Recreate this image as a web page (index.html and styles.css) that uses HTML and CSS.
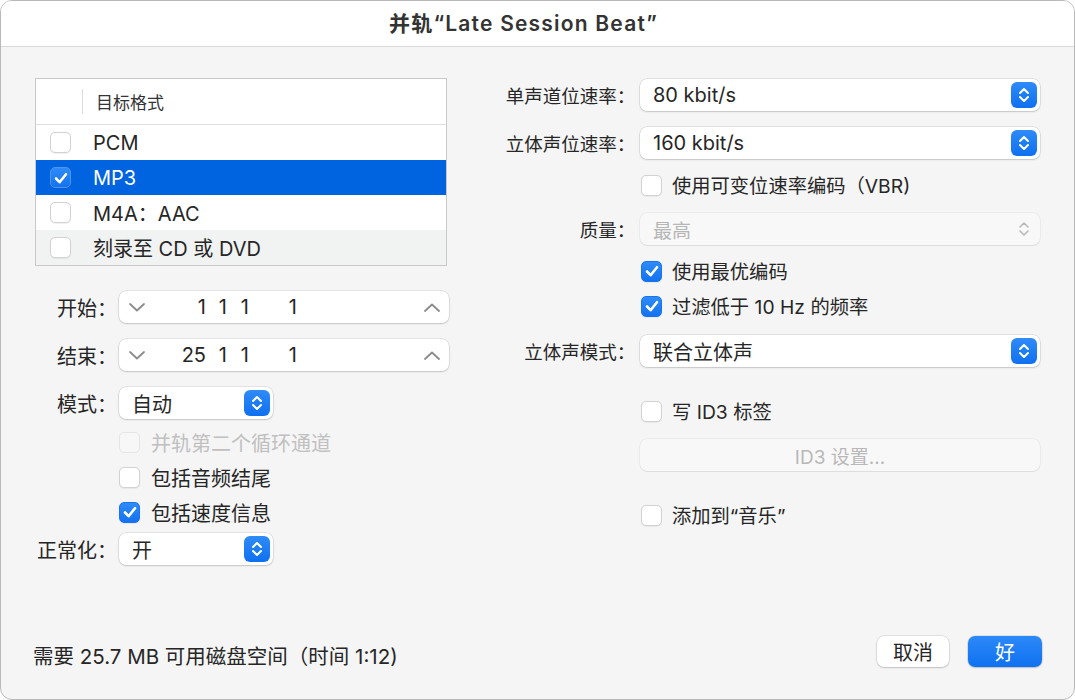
FILE: index.html
```html
<!DOCTYPE html>
<html lang="zh-CN">
<head>
<meta charset="utf-8">
<title>并轨</title>
<link rel="stylesheet" href="styles.css">
</head>
<body>
<div class="window">
  <div class="titlebar">并轨“Late Session Beat”</div>
  <div class="main">
    <div class="col-left">
      <div class="table">
        <div class="thead"><span class="tdiv"></span><span class="th">目标格式</span></div>
        <div class="trow"><span class="cb"></span><span class="tl">PCM</span></div>
        <div class="trow sel"><span class="cb on sel-cb"><svg viewBox="0 0 20 20"><path d="M5 10.5 L8.6 14.2 L15 6.2"/></svg></span><span class="tl">MP3</span></div>
        <div class="trow"><span class="cb"></span><span class="tl">M4A：AAC</span></div>
        <div class="trow alt"><span class="cb"></span><span class="tl">刻录至 CD 或 DVD</span></div>
      </div>

      <div class="frow l m25">
        <span class="lbl">开始：</span>
        <div class="stepper">
          <svg class="chev" viewBox="0 0 16 9"><path d="M1 1 L8 7.5 L15 1"/></svg>
          <span class="nums"><span class="n1">1</span><span class="n2">1</span><span class="n3">1</span><span class="n4">1</span></span>
          <svg class="chev up" viewBox="0 0 16 9"><path d="M1 8 L8 1.5 L15 8"/></svg>
        </div>
      </div>
      <div class="frow l m16">
        <span class="lbl">结束：</span>
        <div class="stepper">
          <svg class="chev" viewBox="0 0 16 9"><path d="M1 1 L8 7.5 L15 1"/></svg>
          <span class="nums"><span class="n1">25</span><span class="n2">1</span><span class="n3">1</span><span class="n4">1</span></span>
          <svg class="chev up" viewBox="0 0 16 9"><path d="M1 8 L8 1.5 L15 8"/></svg>
        </div>
      </div>
      <div class="frow l m16">
        <span class="lbl">模式：</span>
        <div class="popup small"><span class="pv">自动</span><span class="arr"><svg viewBox="0 0 26 26"><path d="M9 11 L13 7 L17 11 M9 15 L13 19 L17 15"/></svg></span></div>
      </div>
      <div class="crow l m11 dis"><span class="cb"></span><span class="ct">并轨第二个循环通道</span></div>
      <div class="crow l m11"><span class="cb"></span><span class="ct">包括音频结尾</span></div>
      <div class="crow l m11"><span class="cb on"><svg viewBox="0 0 20 20"><path d="M5 10.5 L8.6 14.2 L15 6.2"/></svg></span><span class="ct">包括速度信息</span></div>
      <div class="frow l m9">
        <span class="lbl">正常化：</span>
        <div class="popup small"><span class="pv">开</span><span class="arr"><svg viewBox="0 0 26 26"><path d="M9 11 L13 7 L17 11 M9 15 L13 19 L17 15"/></svg></span></div>
      </div>
    </div>

    <div class="col-right">
      <div class="frow r m1">
        <span class="lbl">单声道位速率：</span>
        <div class="popup"><span class="pv">80 kbit/s</span><span class="arr"><svg viewBox="0 0 26 26"><path d="M9 11 L13 7 L17 11 M9 15 L13 19 L17 15"/></svg></span></div>
      </div>
      <div class="frow r m16">
        <span class="lbl">立体声位速率：</span>
        <div class="popup"><span class="pv">160 kbit/s</span><span class="arr"><svg viewBox="0 0 26 26"><path d="M9 11 L13 7 L17 11 M9 15 L13 19 L17 15"/></svg></span></div>
      </div>
      <div class="crow r m14"><span class="cb"></span><span class="ct">使用可变位速率编码（VBR)</span></div>
      <div class="frow r m16">
        <span class="lbl">质量：</span>
        <div class="popup disabled"><span class="pv">最高</span><span class="arr"><svg viewBox="0 0 26 26"><path d="M9 11 L13 7 L17 11 M9 15 L13 19 L17 15"/></svg></span></div>
      </div>
      <div class="crow r m14"><span class="cb on"><svg viewBox="0 0 20 20"><path d="M5 10.5 L8.6 14.2 L15 6.2"/></svg></span><span class="ct">使用最优编码</span></div>
      <div class="crow r m11"><span class="cb on"><svg viewBox="0 0 20 20"><path d="M5 10.5 L8.6 14.2 L15 6.2"/></svg></span><span class="ct">过滤低于 10 Hz 的频率</span></div>
      <div class="frow r m17">
        <span class="lbl">立体声模式：</span>
        <div class="popup"><span class="pv">联合立体声</span><span class="arr"><svg viewBox="0 0 26 26"><path d="M9 11 L13 7 L17 11 M9 15 L13 19 L17 15"/></svg></span></div>
      </div>
      <div class="crow r m32"><span class="cb"></span><span class="ct">写 ID3 标签</span></div>
      <div class="frow r m16">
        <span class="lbl"></span>
        <div class="btn-wide">ID3 设置…</div>
      </div>
      <div class="crow r m32"><span class="cb"></span><span class="ct">添加到“音乐”</span></div>
    </div>
  </div>

  <div class="footer">
    <span class="info">需要 25.7 MB 可用磁盘空间（时间 1:12)</span>
    <div class="btns">
      <span class="btn">取消</span>
      <span class="btn primary">好</span>
    </div>
  </div>
</div>
</body>
</html>
```
FILE: styles.css
```css
html, body {
  margin: 0;
  padding: 0;
  background: #ffffff;
}
body {
  font-family: "Inter", "Noto Sans CJK SC", sans-serif;
  color: #262626;
}
.window {
  width: 1075px;
  height: 700px;
  box-sizing: border-box;
  border: 1px solid #b9b9b9;
  border-radius: 12px;
  overflow: hidden;
  background: #f5f5f5;
  display: flex;
  flex-direction: column;
}
.titlebar {
  height: 46px;
  flex: none;
  background: #ffffff;
  border-bottom: 1px solid #d9d9d9;
  display: flex;
  align-items: center;
  justify-content: center;
  padding: 0 28px 4px 0;
  box-sizing: border-box;
  font-size: 21px;
  font-weight: 600;
  color: #333333;
  letter-spacing: 1.2px;
}
.main {
  display: flex;
  gap: 41px;
  padding: 31px 33px 0 34px;
}
.col-left {
  width: 414px;
  flex: none;
  display: flex;
  flex-direction: column;
}
.col-right {
  width: 550px;
  flex: none;
  display: flex;
  flex-direction: column;
}
.m1 { margin-top: 1px; }
.m9 { margin-top: 9px; }
.m11 { margin-top: 11px; }
.m14 { margin-top: 14px; }
.m16 { margin-top: 16px; }
.m17 { margin-top: 17px; }
.m25 { margin-top: 25px; }
.m32 { margin-top: 32px; }

/* table */
.table {
  width: 412px;
  box-sizing: border-box;
  border: 1px solid #c9c9c9;
  background: #ffffff;
}
.thead {
  height: 45px;
  border-bottom: 1px solid #dedede;
  display: flex;
  align-items: center;
}
.tdiv {
  width: 1px;
  height: 25px;
  background: #dcdcdc;
  margin-left: 46px;
}
.th {
  margin-left: 13px;
  font-size: 17px;
  color: #333;
}
.trow {
  height: 35px;
  display: flex;
  align-items: center;
  font-size: 20px;
  color: #262626;
}
.trow .cb {
  margin-left: 14px;
}
.trow .tl {
  margin-left: 22px;
}
.trow.sel {
  background: #0064e1;
  color: #ffffff;
}
.trow.alt {
  background: #f1f2f2;
}

/* checkbox */
.cb {
  width: 21px;
  height: 21px;
  flex: none;
  box-sizing: border-box;
  border-radius: 5px;
  background: #ffffff;
  border: 1px solid #d2d2d2;
  box-shadow: 0 0.5px 1px rgba(0,0,0,0.06);
  display: flex;
  align-items: center;
  justify-content: center;
}
.cb.on {
  background: linear-gradient(#2f8bf8, #1372f0);
  border: 1px solid #1a74ee;
}
.cb.sel-cb {
  border-color: #4c95f0;
}
.cb svg {
  width: 20px;
  height: 20px;
  flex: none;
}
.cb svg path {
  fill: none;
  stroke: #ffffff;
  stroke-width: 2.6;
  stroke-linecap: round;
  stroke-linejoin: round;
}

/* form rows */
.frow {
  display: flex;
  align-items: center;
  height: 32px;
}
.lbl {
  flex: none;
  box-sizing: border-box;
  text-align: right;
  color: #262626;
  font-feature-settings: "halt";
  white-space: nowrap;
}
.frow.l .lbl {
  width: 84px;
  padding-right: 12px;
  font-size: 20px;
}
.frow.r .lbl {
  width: 150px;
  padding-right: 14px;
  font-size: 18.5px;
}
.crow {
  display: flex;
  align-items: center;
  height: 24px;
  color: #262626;
}
.crow.l {
  padding-left: 84px;
  font-size: 20px;
}
.crow.r {
  padding-left: 151px;
  font-size: 19.3px;
}
.crow .ct {
  margin-left: 11px;
}
.crow.r .ct {
  margin-left: 10px;
}
.crow.dis .cb {
  background: #f7f7f7;
  border-color: #e4e4e4;
  box-shadow: none;
}
.crow.dis .ct {
  color: #c0c0c0;
}

/* stepper */
.stepper {
  width: 330px;
  height: 32px;
  box-sizing: border-box;
  background: #ffffff;
  border-radius: 7px;
  box-shadow: 0 0 0 0.5px rgba(0,0,0,0.14), 0 1px 2px rgba(0,0,0,0.14);
  display: flex;
  align-items: center;
  padding: 0 9px 0 10px;
}
.chev {
  width: 16px;
  height: 9px;
  flex: none;
}
.chev path {
  fill: none;
  stroke: #8b8b8b;
  stroke-width: 1.8;
  stroke-linecap: round;
  stroke-linejoin: round;
}
.nums {
  flex: 1;
  display: flex;
  font-size: 20px;
  color: #262626;
  padding-left: 28px;
}
.nums span {
  display: inline-block;
  text-align: right;
}
.n1 { width: 33px; }
.n2 { width: 21px; }
.n3 { width: 22px; }
.n4 { width: 48px; }

/* popup */
.popup {
  width: 400px;
  height: 32px;
  box-sizing: border-box;
  background: #ffffff;
  border-radius: 7px;
  box-shadow: 0 0 0 0.5px rgba(0,0,0,0.14), 0 1px 2px rgba(0,0,0,0.14);
  display: flex;
  align-items: center;
  justify-content: space-between;
  padding: 0 3px 0 13px;
  font-size: 20px;
  color: #262626;
}
.popup.small {
  width: 154px;
}
.arr {
  width: 26px;
  height: 26px;
  border-radius: 6px;
  background: linear-gradient(#2f8bf8, #0f70f0);
  display: flex;
  flex: none;
}
.arr svg {
  width: 26px;
  height: 26px;
}
.arr svg path {
  fill: none;
  stroke: #ffffff;
  stroke-width: 2;
  stroke-linecap: round;
  stroke-linejoin: round;
}
.popup.disabled {
  background: #f8f8f8;
  box-shadow: 0 0 0 0.5px rgba(0,0,0,0.08), 0 1px 1px rgba(0,0,0,0.06);
  color: #b6b6b6;
  font-size: 19px;
}
.popup.disabled .arr {
  background: transparent;
}
.popup.disabled .arr svg path {
  stroke: #b9b9b9;
  stroke-width: 1.6;
}

.btn-wide {
  width: 400px;
  height: 32px;
  box-sizing: border-box;
  border-radius: 7px;
  background: #f8f8f8;
  box-shadow: 0 0 0 0.5px rgba(0,0,0,0.08), 0 1px 1px rgba(0,0,0,0.06);
  display: flex;
  align-items: center;
  justify-content: center;
  font-size: 19px;
  color: #b8b8b8;
}

/* footer */
.footer {
  margin-top: auto;
  display: flex;
  align-items: flex-end;
  justify-content: space-between;
  padding: 0 32px 32px 32px;
}
.info {
  font-size: 20.5px;
  line-height: 28px;
  color: #262626;
  margin-bottom: -4px;
}
.btns {
  display: flex;
  gap: 19px;
}
.btn {
  height: 31px;
  min-width: 72px;
  box-sizing: border-box;
  border-radius: 7px;
  background: #ffffff;
  box-shadow: 0 0 0 0.5px rgba(0,0,0,0.15), 0 1px 2px rgba(0,0,0,0.16);
  display: flex;
  align-items: center;
  justify-content: center;
  font-size: 20px;
  color: #262626;
}
.btn.primary {
  min-width: 74px;
  background: linear-gradient(#2c89f8, #0f71f0);
  color: #ffffff;
}
```
